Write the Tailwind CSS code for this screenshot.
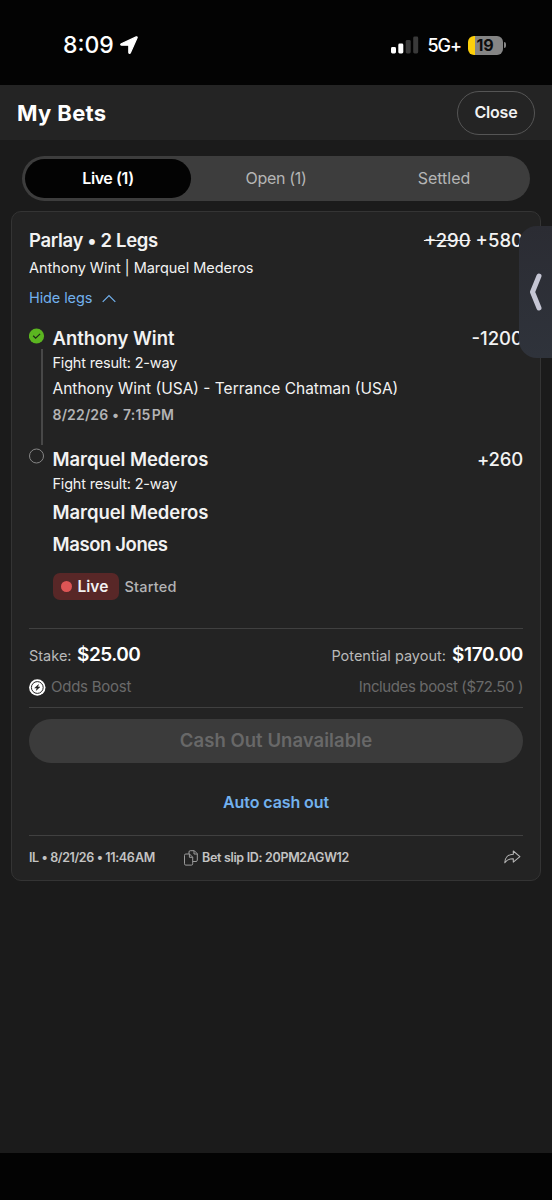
<!DOCTYPE html>
<html lang="en">
<head>
<meta charset="utf-8">
<title>My Bets</title>
<script src="https://cdn.jsdelivr.net/npm/@tailwindcss/browser@4"></script>
</head>
<body class="relative flex h-[1200px] w-[552px] flex-col overflow-hidden bg-[#1b1b1b] font-['Inter','Roboto',sans-serif] whitespace-nowrap text-[#f2f2f2]">

  <!-- Status bar -->
  <div class="flex h-[85px] shrink-0 items-center justify-between bg-[#030303] pt-[5px] pr-[46px] pl-[63px]">
    <div class="flex items-center gap-[6px]">
      <span class="text-[23px] font-medium text-white">8:09</span>
      <svg class="h-[18px] w-[18px]" viewBox="0 0 18 18"><path d="M1.300 7.700 16.200.9c.7-.3 1.200.2.9.9l-6.700 15c-.4.8-1.600.6-1.600-.3V9.700c0-.3-.2-.5-.5-.5H1.600c-1 0-1.200-1.100-.3-1.500Z" fill="#fff" stroke="#fff" stroke-width="1.200" stroke-linejoin="round"/></svg>
    </div>
    <div class="flex items-center">
      <svg class="h-[18px] w-[28px]" viewBox="0 0 28 18"><rect x="0" y="11" width="5" height="6.500" rx="1.400" fill="#fff"/><rect x="7.300" y="7.500" width="5" height="10" rx="1.400" fill="#fff"/><rect x="14.700" y="4" width="5" height="13.500" rx="1.400" fill="#3a3a3a"/><rect x="22.200" y="0.500" width="5" height="17" rx="1.400" fill="#3a3a3a"/></svg>
      <span class="ml-[8px] text-[18px] font-medium tracking-[-1px] text-white">5G+</span>
      <span class="ml-[7px] flex h-[19px] w-[35px] items-center justify-center overflow-hidden rounded-[6px] bg-linear-to-r from-[#fccf0a] from-20% to-[#858585] to-20% pr-px text-[16px] font-bold tracking-[-0.2px] text-[#0c0c0c]">19</span>
      <span class="ml-px h-[6px] w-[2px] rounded-r-full bg-[#858585]"></span>
    </div>
  </div>

  <!-- Header -->
  <header class="flex h-[55px] shrink-0 items-center justify-between bg-[#242424] pr-[17px] pl-[17px]">
    <h1 class="pt-px text-[22px] font-bold tracking-[0.35px] text-white">My Bets</h1>
    <button class="h-[44px] w-[78px] rounded-full border border-[#555] pb-[2px] text-[16px] font-semibold tracking-[-0.2px]">Close</button>
  </header>

  <!-- Tabs -->
  <nav class="mx-[22px] mt-[16px] flex h-[45px] shrink-0 items-center rounded-full bg-[#3d3d3d] p-[3px] text-[16px] text-[#b5b5b5]">
    <span class="flex h-[39px] w-[166px] items-center justify-center rounded-full bg-[#030303] pb-px font-semibold tracking-[-0.4px] text-white">Live (1)</span>
    <span class="flex-1 pb-[2px] pl-[2px] text-center tracking-[-0.3px]">Open (1)</span>
    <span class="flex-1 pb-[2px] pl-[2px] text-center">Settled</span>
  </nav>

  <!-- Bet card -->
  <main class="mx-[11px] mt-[10px] flex h-[670px] shrink-0 flex-col rounded-[10px] border border-[#343434] bg-[#232323] px-[17px]">
    <div class="mt-[16px] flex h-[26px] items-center justify-between text-[18.500px] font-semibold">
      <span class="tracking-[-0.35px]">Parlay • 2 Legs</span>
      <span class="font-medium"><s>+290</s> +580</span>
    </div>
    <div class="mt-[3px] flex h-[22px] items-center text-[14.500px] tracking-[-0.04px]">Anthony Wint | Marquel Mederos</div>
    <div class="mt-[8px] flex h-[22px] items-center gap-[10px] text-[14.500px] tracking-[-0.1px] text-[#72b1ee]">Hide legs
      <svg class="h-[9px] w-[14px]" viewBox="0 0 14 9" fill="none" stroke="#72b1ee" stroke-width="1.200"><path d="M.7 7.800 7 1.500l6.300 6.300"/></svg>
    </div>

    <section class="mt-[17px] flex h-[121px] gap-[7.500px]">
      <div class="flex w-[16px] flex-col items-center">
        <svg class="mt-[2px] h-[16px] w-[16px] shrink-0" viewBox="0 0 16 16"><circle cx="7.500" cy="8" r="7.600" fill="#5bb520"/><path d="m4.200 7.800 2.400 2.400 4.500-4.300" fill="none" stroke="#1d2b16" stroke-width="1.300"/></svg>
        <span class="mt-[5px] ml-[10px] h-[96px] w-[1.500px] shrink-0 bg-[#484848]"></span>
      </div>
      <div class="flex flex-1 flex-col">
        <div class="flex h-[26px] items-center justify-between text-[18.500px] font-semibold"><span>Anthony Wint</span><span class="font-medium">-1200</span></div>
        <div class="-mt-px flex h-[24px] items-center text-[14.500px] tracking-[-0.2px]">Fight result: 2-way</div>
        <div class="mt-[1px] flex h-[26px] items-center text-[15.500px]">Anthony Wint (USA) - Terrance Chatman (USA)</div>
        <div class="flex h-[24px] items-center text-[14px] font-semibold tracking-[0.17px] text-[#b3b3b5]">8/22/26 • 7:15&#8202;PM</div>
      </div>
    </section>

    <section class="flex h-[181px] gap-[7.500px]">
      <svg class="mt-[1px] h-[16px] w-[16px] shrink-0" viewBox="0 0 16 16"><circle cx="7.500" cy="8" r="7" fill="none" stroke="#858585"/></svg>
      <div class="flex flex-1 flex-col">
        <div class="flex h-[26px] items-center justify-between text-[18.500px] font-semibold"><span class="tracking-[-0.06px]">Marquel Mederos</span><span class="font-medium tracking-[-0.2px]">+260</span></div>
        <div class="-mt-px flex h-[24px] items-center text-[14.500px] tracking-[-0.2px]">Fight result: 2-way</div>
        <div class="mt-[4px] flex h-[26px] items-center text-[18.500px] font-semibold tracking-[-0.06px]">Marquel Mederos</div>
        <div class="mt-[6px] flex h-[26px] items-center text-[18.500px] font-semibold tracking-[-0.4px]">Mason Jones</div>
        <div class="mt-[15px] flex h-[27px] items-center gap-[6px]">
          <span class="flex h-[27px] w-[66px] items-center gap-[6px] rounded-[7px] bg-[#582727] pl-[8px] text-[15.500px] font-semibold"><i class="h-[11px] w-[11px] rounded-full bg-[#de5555]"></i>Live</span>
          <span class="text-[14.500px] font-medium tracking-[0.2px] text-[#b3b3b5]">Started</span>
        </div>
      </div>
    </section>

    <div class="flex h-[80px] flex-col border-y border-[#404040]">
      <div class="mt-[12px] flex h-[26px] items-baseline justify-between text-[14.500px] text-[#b9b9b9]">
        <span>Stake: <b class="ml-[1.500px] text-[19px] font-semibold tracking-[-0.5px] text-white">$25.00</b></span>
        <span>Potential payout: <b class="ml-[2px] text-[19px] font-semibold tracking-[-0.38px] text-white">$170.00</b></span>
      </div>
      <div class="mt-[9px] flex h-[22px] items-center justify-between text-[15px] text-[#6a6a6a]">
        <span class="flex items-center gap-[5px] tracking-[-0.25px]"><svg class="h-[17px] w-[17px]" viewBox="0 0 17 17"><circle cx="8.300" cy="8.500" r="8.200" fill="#fff"/><circle cx="8.300" cy="8.500" r="5.900" fill="none" stroke="#232323" stroke-width="1"/><path d="M9.500 5.600 5.700 9h2.300l-.8 2.400L10.900 8H8.700Z" fill="#232323" stroke="#232323" stroke-width=".5"/></svg><span class="mt-px">Odds Boost</span></span>
        <span class="mt-px tracking-[-0.38px]">Includes boost ($72.50 )</span>
      </div>
    </div>

    <button class="mt-[11px] h-[44px] shrink-0 rounded-full bg-[#3b3b3b] text-[18.500px] font-semibold tracking-[0.05px] text-[#686868]">Cash Out Unavailable</button>
    <div class="mt-[27px] flex h-[24px] items-center justify-center text-[16px] font-semibold tracking-[-0.1px] text-[#72b1ee]">Auto cash out</div>
    <footer class="mt-[21px] flex h-[45px] items-center border-t border-[#404040] text-[12.500px] font-semibold text-[#c4c4c4]">
      <span class="w-[155px] tracking-[-0.38px]">IL • 8/21/26 • 11:46&#8202;AM</span>
      <svg class="mr-[4px] h-[16px] w-[14px]" viewBox="0 0 14 16" fill="none" stroke="#9b9b9b" stroke-width="1"><path d="M5 4V2Q5 .7 6.300.7h4L13.300 3.700v6.500q0 1.300-1.300 1.300H8.700"/><path d="M10 .7v3.300h3.300"/><path d="M1.800 4h3.700l3.200 3.200v6.600q0 1.300-1.300 1.300H1.800Q.5 15.100.5 13.800V5.300Q.5 4 1.800 4Z"/><path d="M5.400 4v3.300h3.300"/></svg>
      <span class="tracking-[-0.32px]">Bet slip ID: 20PM2AGW12</span>
      <svg class="mr-[2px] mb-[2px] ml-auto h-[14px] w-[17px]" viewBox="0 0 17 14" fill="none" stroke="#b5b5b5" stroke-width="1.100" stroke-linejoin="round"><path d="M9.300 1v3.200C4.200 4.300.8 7.600.8 12.800c2-3 4.700-4.200 8.500-4.100v3.400L15.900 6.600Z"/></svg>
    </footer>
  </main>

  <!-- Bottom bar -->
  <div class="mt-auto h-[47px] shrink-0 bg-[#030303]"></div>

  <!-- Side drawer handle -->
  <aside class="absolute top-[226px] right-0 flex h-[132px] w-[33px] items-center justify-center rounded-l-[18px] bg-linear-to-b from-[#2b2c33] to-[#2f333b]">
    <svg class="h-[38px] w-[14px]" viewBox="0 0 14 38" fill="none" stroke="#c5c6d4" stroke-width="5" stroke-linecap="round" stroke-linejoin="round"><path d="M10 3 3.500 19 10 35"/></svg>
  </aside>
</body>
</html>
